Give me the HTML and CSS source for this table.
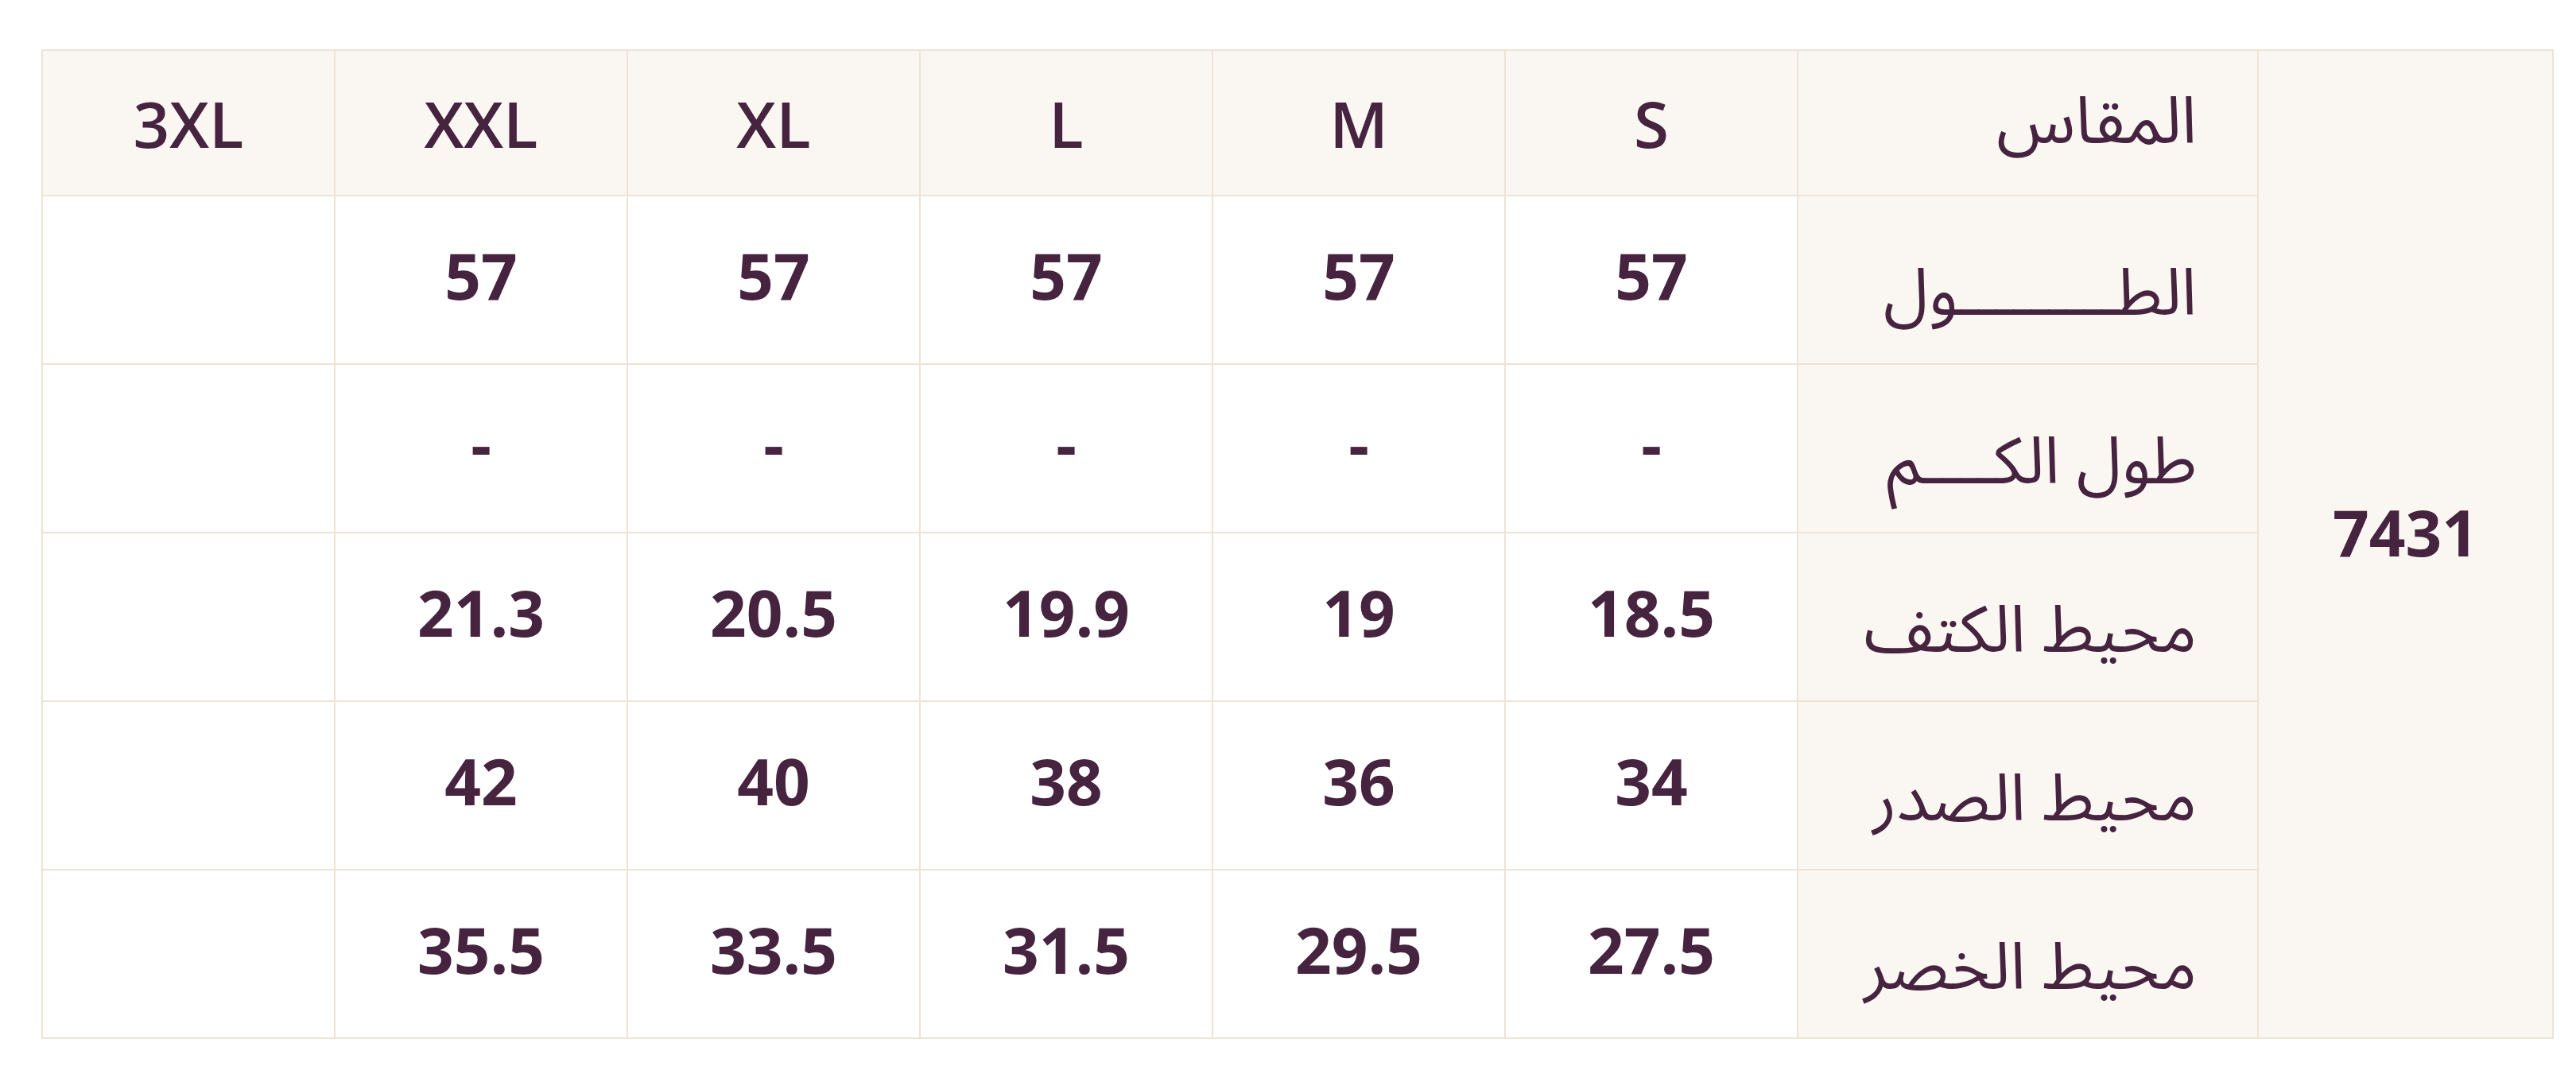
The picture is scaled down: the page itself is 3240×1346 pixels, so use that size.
FILE: index.html
```html
<!DOCTYPE html>
<html lang="ar">
<head>
<meta charset="utf-8">
<title>جدول المقاسات</title>
<link rel="stylesheet" href="styles.css">
</head>
<body>
<div class="wrap">
<table class="sizes" dir="rtl">
  <colgroup>
    <col class="c-code"><col class="c-label">
    <col class="c-size"><col class="c-size"><col class="c-size"><col class="c-size"><col class="c-size"><col class="c-size">
  </colgroup>
  <tr class="head">
    <td class="code" rowspan="6">7431</td>
    <th class="label">المقاس</th>
    <th>S</th><th>M</th><th>L</th><th>XL</th><th>XXL</th><th>3XL</th>
  </tr>
  <tr>
    <th class="label">الطـــــــــول</th>
    <td>57</td><td>57</td><td>57</td><td>57</td><td>57</td><td></td>
  </tr>
  <tr>
    <th class="label">طول الكــــم</th>
    <td>-</td><td>-</td><td>-</td><td>-</td><td>-</td><td></td>
  </tr>
  <tr>
    <th class="label">محيط الكتف</th>
    <td>18.5</td><td>19</td><td>19.9</td><td>20.5</td><td>21.3</td><td></td>
  </tr>
  <tr>
    <th class="label">محيط الصدر</th>
    <td>34</td><td>36</td><td>38</td><td>40</td><td>42</td><td></td>
  </tr>
  <tr>
    <th class="label">محيط الخصر</th>
    <td>27.5</td><td>29.5</td><td>31.5</td><td>33.5</td><td>35.5</td><td></td>
  </tr>
</table>
</div>
</body>
</html>
```

FILE: styles.css
```css
html, body {
  margin: 0;
  padding: 0;
  background: #ffffff;
}

.wrap {
  padding: 62px 31px 0 52px;
}

.sizes {
  border-collapse: collapse;
  table-layout: fixed;
  width: 3157px;
  color: #46233f;
  font-family: "Open Sans", "Noto Sans", "Noto Sans Arabic", "DejaVu Sans", sans-serif;
  font-size: 80px;
}

.c-code { width: 371px; }
.c-label { width: 579px; }
.c-size { width: 368px; }

.sizes td,
.sizes th {
  border: 2px solid #ece4d5;
  text-align: center;
  vertical-align: middle;
  padding: 0 0 12px 0;
  height: 198px;
  font-weight: 700;
  background: #ffffff;
  line-height: 1.2;
}

.sizes tr.head th,
.sizes tr.head td {
  height: 181px;
  padding: 0;
}

.sizes tr.head th {
  background: #faf7f3;
  font-weight: 600;
}

.sizes th.label {
  background: #faf7f3;
  text-align: right;
  padding: 36px 76px 0 0;
  height: 174px;
  font-family: "Noto Sans Arabic", "Noto Sans", "DejaVu Sans", sans-serif;
  font-weight: 400;
  font-size: 82px;
}

.sizes tr.head th.label {
  padding: 0 76px 0 0;
  height: 181px;
  font-weight: 400;
}

.sizes tr.head td.code {
  background: #faf7f3;
  font-weight: 700;
  padding: 0 0 32px 0;
}
```
